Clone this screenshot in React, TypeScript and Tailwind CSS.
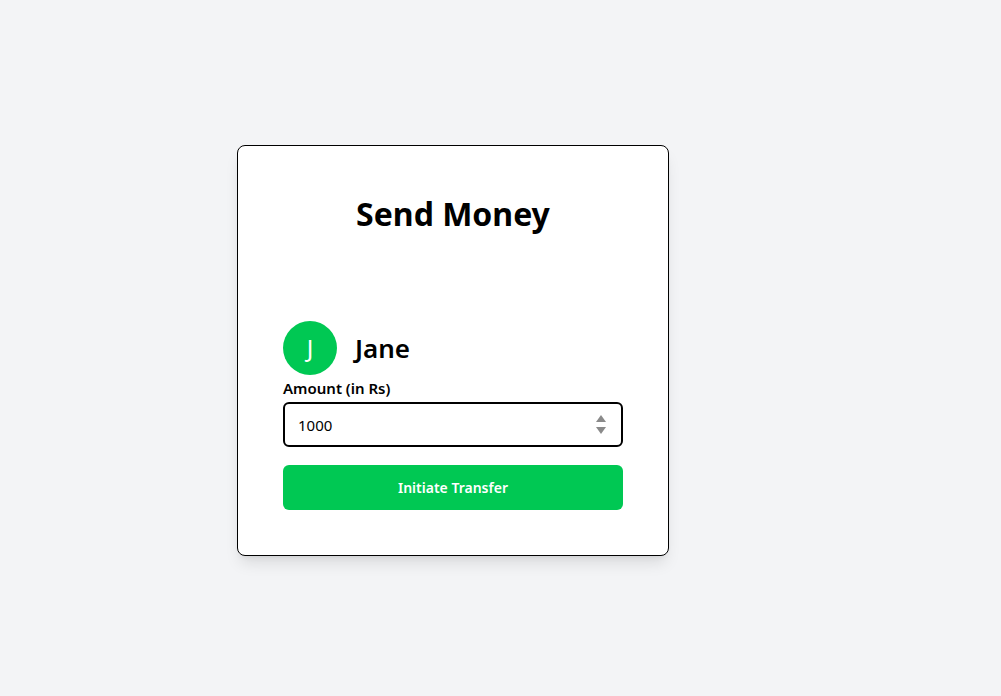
export default function App() {
  return (
    <div
      className="flex min-h-screen items-center bg-[#f3f4f6] pl-[237px] pt-[5px]"
      style={{ fontFamily: '"Noto Sans", "Open Sans", sans-serif' }}
    >
      <div className="flex h-[411px] w-[432px] flex-col rounded-lg border border-black bg-white px-[45px] pt-[50px] shadow-lg">
        <h2 className="text-center text-[32px] font-bold leading-9 text-black">Send Money</h2>

        <div className="mt-[89px] flex items-center gap-[18px]">
          <div className="flex h-[54px] w-[54px] items-center justify-center rounded-full bg-[#00c853]">
            <span className="text-2xl text-white">J</span>
          </div>
          <h3 className="text-[26px] font-semibold text-black">Jane</h3>
        </div>

        <label className="mt-[3px] text-[15px] font-semibold leading-5 text-black">Amount (in Rs)</label>
        <div className="relative mt-[4px]">
          <input
            type="text"
            defaultValue="1000"
            className="h-[45px] w-full rounded-md border-2 border-black px-[13px] text-[15px] text-black outline-none"
          />
          <svg className="absolute right-[16px] top-[12px]" width="12" height="21" viewBox="0 0 12 21">
            <path d="M6 1 L11 8 L1 8 Z" fill="#8a8a8a" />
            <path d="M1 13 L11 13 L6 20 Z" fill="#8a8a8a" />
          </svg>
        </div>

        <button className="mt-[18px] h-[45px] w-full rounded-md bg-[#00c853] text-[14px] font-semibold text-white">
          Initiate Transfer
        </button>
      </div>
    </div>
  );
}
